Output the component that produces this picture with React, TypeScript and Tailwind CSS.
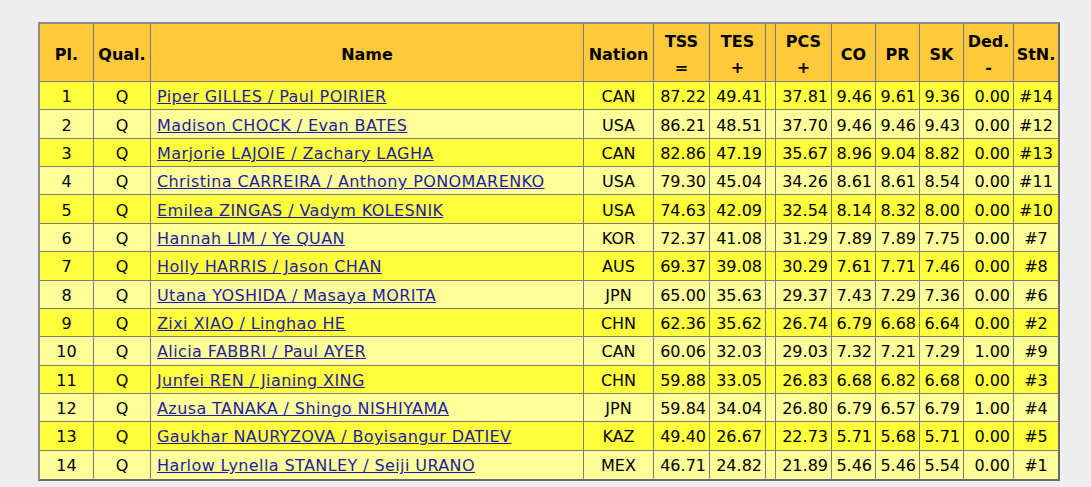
import React from "react";

type Row = {
  pl: number;
  name: string;
  nation: string;
  tss: string;
  tes: string;
  pcs: string;
  co: string;
  pr: string;
  sk: string;
  ded: string;
  stn: string;
};

const rows: Row[] = [
  { pl: 1, name: "Piper GILLES / Paul POIRIER", nation: "CAN", tss: "87.22", tes: "49.41", pcs: "37.81", co: "9.46", pr: "9.61", sk: "9.36", ded: "0.00", stn: "#14" },
  { pl: 2, name: "Madison CHOCK / Evan BATES", nation: "USA", tss: "86.21", tes: "48.51", pcs: "37.70", co: "9.46", pr: "9.46", sk: "9.43", ded: "0.00", stn: "#12" },
  { pl: 3, name: "Marjorie LAJOIE / Zachary LAGHA", nation: "CAN", tss: "82.86", tes: "47.19", pcs: "35.67", co: "8.96", pr: "9.04", sk: "8.82", ded: "0.00", stn: "#13" },
  { pl: 4, name: "Christina CARREIRA / Anthony PONOMARENKO", nation: "USA", tss: "79.30", tes: "45.04", pcs: "34.26", co: "8.61", pr: "8.61", sk: "8.54", ded: "0.00", stn: "#11" },
  { pl: 5, name: "Emilea ZINGAS / Vadym KOLESNIK", nation: "USA", tss: "74.63", tes: "42.09", pcs: "32.54", co: "8.14", pr: "8.32", sk: "8.00", ded: "0.00", stn: "#10" },
  { pl: 6, name: "Hannah LIM / Ye QUAN", nation: "KOR", tss: "72.37", tes: "41.08", pcs: "31.29", co: "7.89", pr: "7.89", sk: "7.75", ded: "0.00", stn: "#7" },
  { pl: 7, name: "Holly HARRIS / Jason CHAN", nation: "AUS", tss: "69.37", tes: "39.08", pcs: "30.29", co: "7.61", pr: "7.71", sk: "7.46", ded: "0.00", stn: "#8" },
  { pl: 8, name: "Utana YOSHIDA / Masaya MORITA", nation: "JPN", tss: "65.00", tes: "35.63", pcs: "29.37", co: "7.43", pr: "7.29", sk: "7.36", ded: "0.00", stn: "#6" },
  { pl: 9, name: "Zixi XIAO / Linghao HE", nation: "CHN", tss: "62.36", tes: "35.62", pcs: "26.74", co: "6.79", pr: "6.68", sk: "6.64", ded: "0.00", stn: "#2" },
  { pl: 10, name: "Alicia FABBRI / Paul AYER", nation: "CAN", tss: "60.06", tes: "32.03", pcs: "29.03", co: "7.32", pr: "7.21", sk: "7.29", ded: "1.00", stn: "#9" },
  { pl: 11, name: "Junfei REN / Jianing XING", nation: "CHN", tss: "59.88", tes: "33.05", pcs: "26.83", co: "6.68", pr: "6.82", sk: "6.68", ded: "0.00", stn: "#3" },
  { pl: 12, name: "Azusa TANAKA / Shingo NISHIYAMA", nation: "JPN", tss: "59.84", tes: "34.04", pcs: "26.80", co: "6.79", pr: "6.57", sk: "6.79", ded: "1.00", stn: "#4" },
  { pl: 13, name: "Gaukhar NAURYZOVA / Boyisangur DATIEV", nation: "KAZ", tss: "49.40", tes: "26.67", pcs: "22.73", co: "5.71", pr: "5.68", sk: "5.71", ded: "0.00", stn: "#5" },
  { pl: 14, name: "Harlow Lynella STANLEY / Seiji URANO", nation: "MEX", tss: "46.71", tes: "24.82", pcs: "21.89", co: "5.46", pr: "5.46", sk: "5.54", ded: "0.00", stn: "#1" },
];

const cols = "grid-cols-[54px_57px_433px_70px_56px_56px_10px_56px_44px_44px_44px_50px_44px]";

function Head({ top, bottom, last }: { top?: string; bottom?: string; last?: boolean }) {
  return (
    <div
      className={`flex flex-col items-center justify-center pt-[4px] font-bold leading-[26px] border-b border-[#7c7c7c] ${
        last ? "" : "border-r"
      }`}
    >
      {top && <span>{top}</span>}
      {bottom && <span>{bottom}</span>}
    </div>
  );
}

function Cell({
  children,
  align = "right",
  last,
  bottom,
}: {
  children?: React.ReactNode;
  align?: "left" | "center" | "right";
  last?: boolean;
  bottom?: boolean;
}) {
  const a =
    align === "left"
      ? "justify-start pl-[6px]"
      : align === "center"
      ? "justify-center"
      : "justify-end pr-[3px]";
  return (
    <div
      className={`flex items-center pt-[3px] whitespace-nowrap border-[#7c7c7c] ${a} ${last ? "" : "border-r"} ${
        bottom ? "" : "border-b"
      }`}
    >
      {children}
    </div>
  );
}

export default function App() {
  return (
    <div className="min-h-[487px] w-[1091px] bg-[#eeeeee] pt-[22px] pl-[38px] text-black text-[16px] font-['DejaVu_Sans',Verdana,sans-serif]">
      <div className="w-fit border-2 border-t-[#8c8c8c] border-l-[#8c8c8c] border-b-[#6a6a6a] border-r-[#6a6a6a]">
        {/* header */}
        <div className={`grid ${cols} h-[58px] bg-[#ffc93c]`}>
          <Head top="Pl." />
          <Head top="Qual." />
          <Head top="Name" />
          <Head top="Nation" />
          <Head top="TSS" bottom="=" />
          <Head top="TES" bottom="+" />
          <Head />
          <Head top="PCS" bottom="+" />
          <Head top="CO" />
          <Head top="PR" />
          <Head top="SK" />
          <Head top="Ded." bottom="-" />
          <Head top="StN." last />
        </div>

        {/* results */}
        {rows.map((r, i) => {
          const last = i === rows.length - 1;
          return (
            <div
              key={r.pl}
              className={`grid ${cols} h-[28.36px] ${i % 2 === 0 ? "bg-[#ffff3c]" : "bg-[#ffff99]"}`}
            >
              <Cell align="center" bottom={last}>{r.pl}</Cell>
              <Cell align="center" bottom={last}>Q</Cell>
              <Cell align="left" bottom={last}>
                <a href="#" className="text-[#1c1ca6] underline tracking-[0.4px]">
                  {r.name}
                </a>
              </Cell>
              <Cell align="center" bottom={last}>{r.nation}</Cell>
              <Cell bottom={last}>{r.tss}</Cell>
              <Cell bottom={last}>{r.tes}</Cell>
              <Cell bottom={last} />
              <Cell bottom={last}>{r.pcs}</Cell>
              <Cell bottom={last}>{r.co}</Cell>
              <Cell bottom={last}>{r.pr}</Cell>
              <Cell bottom={last}>{r.sk}</Cell>
              <Cell bottom={last}>{r.ded}</Cell>
              <Cell align="center" last bottom={last}>{r.stn}</Cell>
            </div>
          );
        })}
      </div>
    </div>
  );
}
